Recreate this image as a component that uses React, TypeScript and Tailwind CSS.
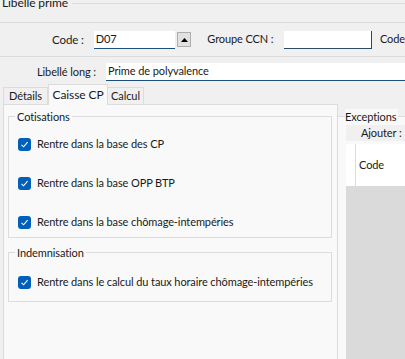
import React from "react";

const Check = () => (
  <span className="flex h-[13px] w-[13px] shrink-0 items-center justify-center rounded-[3px] bg-[#005fb8]">
    <svg width="9" height="9" viewBox="0 0 9 9" fill="none">
      <path d="M1.5 4.8 L3.6 6.8 L7.6 2.2" stroke="white" strokeWidth="1.1" />
    </svg>
  </span>
);

const CheckRow = ({ label }: { label: string }) => (
  <div className="flex h-[16px] items-center gap-[6px] pl-[9px] whitespace-nowrap">
    <Check />
    <span>{label}</span>
  </div>
);

const Group = ({
  title,
  className,
  children,
}: {
  title: string;
  className?: string;
  children: React.ReactNode;
}) => (
  <div className={`relative border border-[#dcdcdc] ${className ?? ""}`}>
    <span className="absolute -top-[8px] left-[6px] bg-[#f9f9f9] px-[2px] leading-[15px]">
      {title}
    </span>
    {children}
  </div>
);

const App: React.FC = () => {
  return (
    <div className="flex h-[359px] w-[405px] flex-col overflow-hidden bg-[#f0f0f0] text-[11px] tracking-[-0.1px] text-[#1a1a1a] [font-family:Lato,sans-serif]">
      {/* Libelle prime */}
      <div className="flex h-[22px] items-start">
        <span className="-mt-[5px] ml-[2px] text-[12px] leading-[15px]">Libelle prime</span>
        <div className="ml-[4px] mt-[3px] h-px flex-1 bg-[#dcdcdc]" />
      </div>

      <div className="flex h-[35px] items-center border-y border-[#dcdcdc] whitespace-nowrap">
        <span className="ml-[52px] w-[32px] text-[11.5px]">Code :</span>
        <div className="ml-[10px] flex h-[18px] w-[83px] items-center border-b border-[#1e4f7a] bg-white pl-[2px]">
          D07
        </div>
        <button className="ml-[2px] flex h-[15px] w-[15px] items-center justify-center border border-[#adadad] bg-[#e1e1e1]">
          <svg width="7" height="4" viewBox="0 0 7 4">
            <path d="M0 4 L3.5 0 L7 4 Z" fill="#000" />
          </svg>
        </button>
        <span className="ml-[16px] w-[65px]">Groupe CCN :</span>
        <div className="ml-[12px] h-[18px] w-[90px] border-r border-b border-[#2b4b66] bg-white" />
        <span className="ml-[8px]">Code</span>
      </div>

      {/* Libellé long */}
      <div className="mt-[6px] flex h-[18px] items-center whitespace-nowrap">
        <span className="ml-[37px] w-[59px]">Libellé long :</span>
        <div className="ml-[10px] flex h-[18px] flex-1 items-center border-b border-[#1e4f7a] bg-white pl-[2px]">
          Prime de polyvalence
        </div>
      </div>

      {/* Tabs */}
      <div className="mt-[3px] flex h-[20px] items-end pl-[3px]">
        <div className="flex h-[17px] w-[45px] items-center justify-center border border-b-0 border-[#dcdcdc]">
          Détails
        </div>
        <div className="relative z-10 -mb-px flex h-[21px] w-[60px] items-center justify-center border border-b-0 border-[#dcdcdc] bg-[#f9f9f9] text-[12px]">
          Caisse CP
        </div>
        <div className="flex h-[17px] w-[36px] items-center justify-center border border-b-0 border-l-0 border-[#dcdcdc]">
          Calcul
        </div>
      </div>

      {/* Body */}
      <div className="flex flex-1">
        <div className="ml-[3px] flex w-[334px] flex-col border-l border-t border-[#dcdcdc] bg-[#f9f9f9] pl-[4px] pr-[5px] pt-[11px]">
          <Group title="Cotisations" className="flex h-[122px] flex-col gap-[23px] pt-[19px]">
            <CheckRow label="Rentre dans la base des CP" />
            <CheckRow label="Rentre dans la base OPP BTP" />
            <CheckRow label="Rentre dans la base chômage-intempéries" />
          </Group>
          <Group title="Indemnisation" className="mt-[14px] h-[50px] pt-[21px]">
            <CheckRow label="Rentre dans le calcul du taux horaire chômage-intempéries" />
          </Group>
        </div>

        <div className="flex flex-1 flex-col border-l border-[#dcdcdc]">
          <div className="h-[12px]" />
          <div className="relative flex flex-1 flex-col border-t border-[#dcdcdc] bg-[#f9f9f9] pl-[8px]">
            <span className="absolute -top-[8px] left-[7px] bg-[#f9f9f9] pr-[2px] leading-[15px]">
              Exceptions
            </span>
            <div className="mt-[8px] flex h-[16px] items-center bg-[#f0f0f0] pl-[15px] whitespace-nowrap">
              Ajouter :
            </div>
            <div className="mt-[3px] flex h-[42px] bg-white">
              <div className="w-[10px] border-r border-[#dcdcdc]" />
              <div className="flex items-center pl-[3px]">Code</div>
            </div>
            <div className="flex-1 bg-[#dadada]" />
          </div>
        </div>
      </div>
    </div>
  );
};

export default App;
